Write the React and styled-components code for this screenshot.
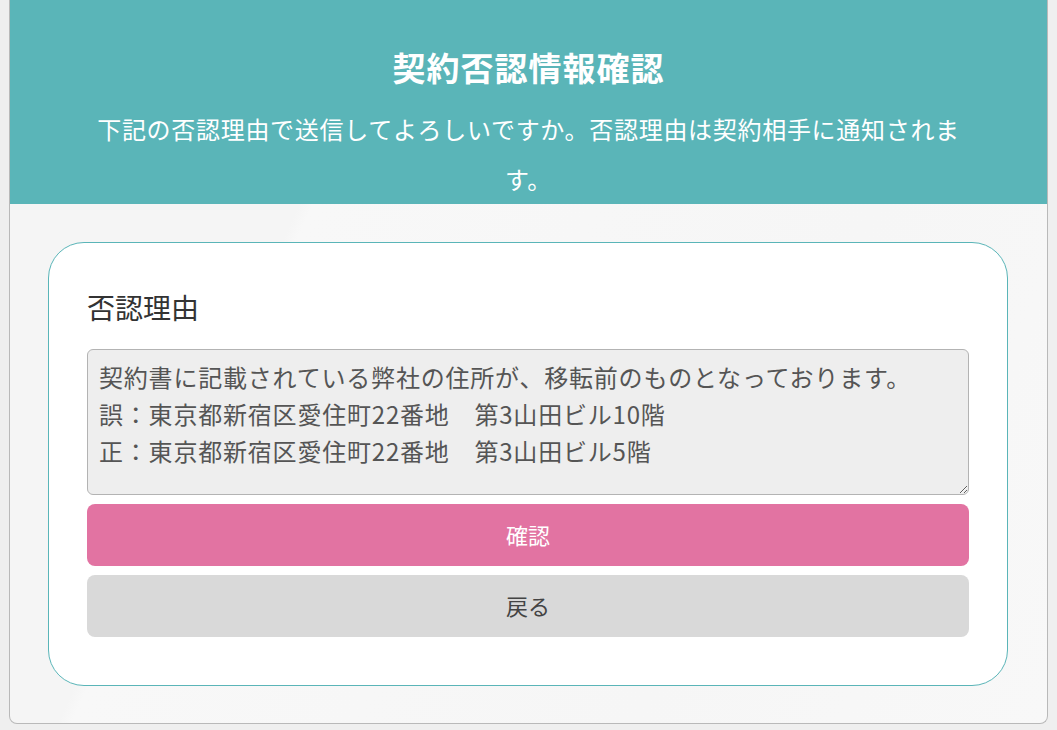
import React from "react";
import styled, { createGlobalStyle } from "styled-components";

const GlobalStyle = createGlobalStyle`
	html, body {
		margin: 0;
		padding: 0;
		background: #efefef;
		font-family: "Noto Sans CJK JP", "Noto Sans", sans-serif;
	}
`;

function App() {
	return (
		<>
			<GlobalStyle />
			<Page>
				<Panel>
					<Header>
						<Title>契約否認情報確認</Title>
						<Lead>
							下記の否認理由で送信してよろしいですか。否認理由は契約相手に通知されます。
						</Lead>
					</Header>
					<Body>
						<Card>
							<Label>否認理由</Label>
							<Reason
								readOnly
								defaultValue={
									"契約書に記載されている弊社の住所が、移転前のものとなっております。\n誤：東京都新宿区愛住町22番地　第3山田ビル10階\n正：東京都新宿区愛住町22番地　第3山田ビル5階"
								}
							/>
							<Btn $variant="primary">確認</Btn>
							<Btn>戻る</Btn>
						</Card>
					</Body>
				</Panel>
			</Page>
		</>
	);
}

const Page = styled.div`
	padding: 0 9px 6px 9px;
	height: 730px;
	box-sizing: border-box;
	overflow: hidden;
`;

const Panel = styled.div`
	border: 1px solid #b9b9b9;
	border-top: none;
	border-radius: 0 0 8px 8px;
	overflow: hidden;
	background-color: #f5f5f5;
	background-image: linear-gradient(
		115deg,
		#f5f5f5 0%,
		#f5f5f5 28%,
		#f8f8f8 29%,
		#f6f6f6 70%,
		#f8f8f8 100%
	);
`;

const Header = styled.div`
	background: #5ab5b8;
	color: #fff;
	text-align: center;
	padding: 42px 80px 0;
`;

const Title = styled.h1`
	margin: 0 0 11px;
	font-size: 33px;
	line-height: 51px;
	font-weight: 700;
	letter-spacing: 1px;
`;

const Lead = styled.p`
	margin: 0;
	font-size: 24px;
	line-height: 50px;
	letter-spacing: 0.7px;
`;

const Body = styled.div`
	padding: 38px 39px 37px 38px;
`;

const Card = styled.div`
	background: #fff;
	border: 1px solid #5ab5b8;
	border-radius: 36px;
	padding: 44px 38px 48px;
	display: flex;
	flex-direction: column;
`;

const Label = styled.div`
	font-size: 28px;
	line-height: 40px;
	color: #333;
	margin-bottom: 22px;
`;

const Reason = styled.textarea`
	box-sizing: border-box;
	height: 146px;
	width: 100%;
	background: #eeeeee;
	border: 1px solid #b3b3b3;
	border-radius: 6px;
	padding: 8px 11px 10px;
	font-family: inherit;
	font-size: 24px;
	line-height: 37px;
	letter-spacing: 0.8px;
	color: #555;
	margin: 0 0 9px;
	outline: none;
	resize: vertical;
`;

const Btn = styled.button`
	height: 62px;
	border: none;
	border-radius: 8px;
	font-family: inherit;
	font-size: 22px;
	padding: 0 0 3px;
	cursor: pointer;
	background: ${(p) => (p.$variant === "primary" ? "#e273a2" : "#d9d9d9")};
	color: ${(p) => (p.$variant === "primary" ? "#fff" : "#444")};
	margin-bottom: ${(p) => (p.$variant === "primary" ? "9px" : "0")};
`;

export default App;
